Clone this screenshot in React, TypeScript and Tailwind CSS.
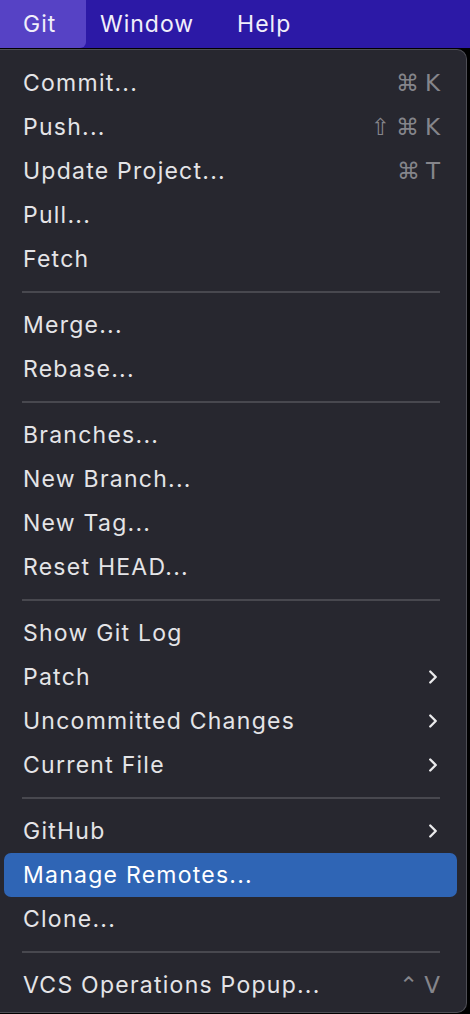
import { ChevronRight } from "lucide-react";

type Item =
  | { kind: "sep" }
  | { kind: "item"; label: string; shortcut?: string[]; submenu?: boolean; active?: boolean };

const items: Item[] = [
  { kind: "item", label: "Commit...", shortcut: ["⌘", "K"] },
  { kind: "item", label: "Push...", shortcut: ["⇧", "⌘", "K"] },
  { kind: "item", label: "Update Project...", shortcut: ["⌘", "T"] },
  { kind: "item", label: "Pull..." },
  { kind: "item", label: "Fetch" },
  { kind: "sep" },
  { kind: "item", label: "Merge..." },
  { kind: "item", label: "Rebase..." },
  { kind: "sep" },
  { kind: "item", label: "Branches..." },
  { kind: "item", label: "New Branch..." },
  { kind: "item", label: "New Tag..." },
  { kind: "item", label: "Reset HEAD..." },
  { kind: "sep" },
  { kind: "item", label: "Show Git Log" },
  { kind: "item", label: "Patch", submenu: true },
  { kind: "item", label: "Uncommitted Changes", submenu: true },
  { kind: "item", label: "Current File", submenu: true },
  { kind: "sep" },
  { kind: "item", label: "GitHub", submenu: true },
  { kind: "item", label: "Manage Remotes...", active: true },
  { kind: "item", label: "Clone..." },
  { kind: "sep" },
  { kind: "item", label: "VCS Operations Popup...", shortcut: ["⌃", "V"] },
];

export default function App() {
  return (
    <div
      className="w-[470px] h-[1014px] bg-black overflow-hidden"
      style={{ fontFamily: "Inter, 'Noto Sans', sans-serif" }}
    >
      {/* menu bar */}
      <div className="h-[48px] bg-[#2c19a6] flex items-center text-[23px] tracking-[1px] text-[#f1effa]">
        <div className="h-full w-[86px] bg-[#5642c5] rounded-br-md flex items-center pl-[23px]">
          Git
        </div>
        <div className="ml-[14px]">Window</div>
        <div className="ml-[43px]">Help</div>
      </div>

      {/* dropdown */}
      <div className="mt-px w-[467px] h-[964px] bg-[#27272f] border border-l-0 border-[#4e4e55] rounded-r-[10px] pt-[11px]">
        {items.map((it, i) =>
          it.kind === "sep" ? (
            <div key={i} className="h-[22px] flex items-center pl-[22px] pr-[26px]">
              <div className="h-[2px] w-full bg-[#48484f]" />
            </div>
          ) : (
            <div
              key={i}
              className={`h-[44px] mx-[4px] mr-[9px] rounded-[7px] flex items-center pl-[19px] pr-[17px] text-[23px] tracking-[1.25px] ${
                it.active ? "bg-[#2f65b5] text-white" : "text-[#e4e4e7]"
              }`}
            >
              <span className="flex-1">{it.label}</span>
              {it.shortcut && (
                <span
                  className="flex items-center gap-[6px] text-[#85858b] text-[23px] tracking-normal"
                  style={{ fontFamily: "'DejaVu Sans', Inter, sans-serif" }}
                >
                  {it.shortcut.map((s, j) => (
                    <span key={j}>{s}</span>
                  ))}
                </span>
              )}
              {it.submenu && <ChevronRight className="w-[22px] h-[22px] -mr-[4px] text-[#eaeaec]" strokeWidth={2.6} />}
            </div>
          )
        )}
      </div>
    </div>
  );
}
